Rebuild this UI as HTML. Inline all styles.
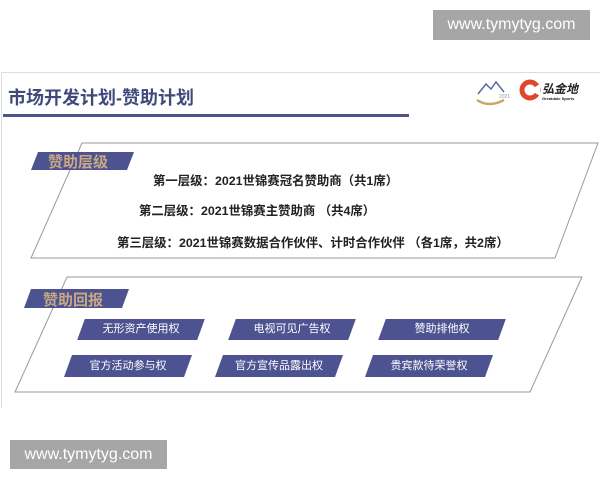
<!DOCTYPE html>
<html><head><meta charset="utf-8"><style>
*{margin:0;padding:0;box-sizing:border-box}
body{width:600px;height:480px;background:#fff;position:relative;overflow:hidden;font-family:"Liberation Sans","Noto Sans CJK SC",sans-serif}
.wm{position:absolute;background:#a6a6a6;color:#fff;font-size:16px;line-height:30px;text-align:center}
.slide{position:absolute;left:1px;top:72px;width:599px;height:336px;border-top:1px solid #ddd;border-left:1px solid #ddd}
.t{position:absolute;font-weight:bold;font-size:12.4px;color:#222;white-space:nowrap}
.b{position:absolute;color:#fff;font-size:11px;text-align:center;line-height:21px}
.b:before{content:"";position:absolute;left:0;top:0;right:0;bottom:0;background:#4d5391;transform:skewX(-20deg);z-index:-1}
.b{z-index:1}
</style></head><body>
<div class="wm" style="left:433px;top:10px;width:157px;height:30px">www.tymytyg.com</div>
<div class="slide"></div>
<div style="position:absolute;left:8px;top:84px;font-size:18px;font-weight:bold;color:#3f4a7c">市场开发计划-赞助计划</div>
<div style="position:absolute;left:3px;top:114px;width:406px;height:3px;background:#4f5389"></div>
<svg style="position:absolute;left:474px;top:78px" width="40" height="30"><path d="M4 16 L12 6 L17 11 L22 4 L30 14" stroke="#5a6aa0" fill="none" stroke-width="1.5"/><path d="M3 22 Q15 30 30 22" stroke="#c9a86a" fill="none" stroke-width="2.5"/><text x="25" y="20" font-size="5" fill="#999">2021</text></svg>
<svg style="position:absolute;left:519px;top:79px" width="22" height="22"><circle cx="11" cy="11" r="8" fill="none" stroke="#e0482b" stroke-width="5"/><path d="M11 11 L21 5 L21 17 Z" fill="#fff"/></svg>
<div style="position:absolute;left:542px;top:80px;font-size:12px;font-weight:bold;color:#222;font-style:italic">弘金地</div>
<div style="position:absolute;left:542px;top:96px;font-size:4px;color:#222;font-weight:bold">Greatdale Sports</div>
<svg style="position:absolute;left:0;top:0" width="600" height="480"><polygon points="82,143 598,143 555,258 31,258" fill="none" stroke="#999" stroke-width="1"/><polygon points="67,277 582,277 530,392 15,392" fill="none" stroke="#999" stroke-width="1"/>
<polygon points="38,152 134,152 127,170 31,170" fill="#4d5391"/><polygon points="31,289 129,289 122,308 24,308" fill="#4d5391"/></svg>
<div style="position:absolute;left:48px;top:151px;font-size:15px;font-weight:bold;color:#c9a882">赞助层级</div>
<div style="position:absolute;left:43px;top:289px;font-size:15px;font-weight:bold;color:#c9a882">赞助回报</div>
<div class="t" style="left:153px;top:171px">第一层级：2021世锦赛冠名赞助商（共1席）</div>
<div class="t" style="left:139px;top:201px">第二层级：2021世锦赛主赞助商 （共4席）</div>
<div class="t" style="left:117px;top:233px">第三层级：2021世锦赛数据合作伙伴、计时合作伙伴 （各1席，共2席）</div>
<div class="b" style="left:81px;top:319px;width:120px">无形资产使用权</div>
<div class="b" style="left:232px;top:319px;width:120px">电视可见广告权</div>
<div class="b" style="left:382px;top:319px;width:120px">赞助排他权</div>
<div class="b" style="left:68px;top:355px;width:120px;line-height:22px;height:22px">官方活动参与权</div>
<div class="b" style="left:219px;top:355px;width:120px;line-height:22px;height:22px">官方宣传品露出权</div>
<div class="b" style="left:369px;top:355px;width:120px;line-height:22px;height:22px">贵宾款待荣誉权</div>
<div class="wm" style="left:10px;top:440px;width:157px;height:29px;line-height:29px">www.tymytyg.com</div>
</body></html>
